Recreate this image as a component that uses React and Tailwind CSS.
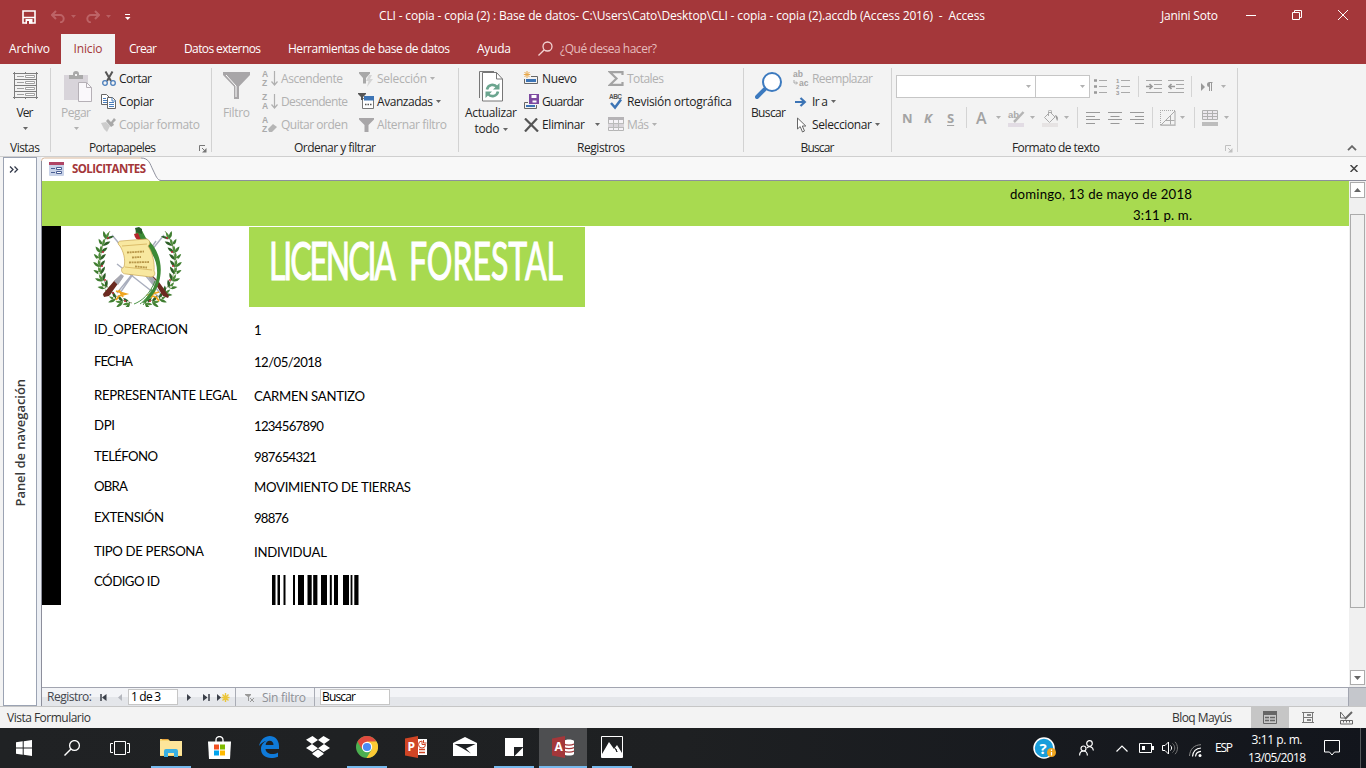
import { useLayoutEffect, useRef } from "react";

/* Text whose tracking is computed so that it spans exactly `w` pixels. */
function Fit({ w, className = "", children }) {
  const ref = useRef(null);
  useLayoutEffect(() => {
    const el = ref.current;
    el.style.letterSpacing = "0px";
    const natural = el.getBoundingClientRect().width;
    el.style.letterSpacing = (w - natural) / Math.max(1, children.length - 1) + "px";
    el.style.width = w + "px";
  }, [w, children]);
  return (
    <span ref={ref} className={"inline-block shrink-0 whitespace-pre " + className}>
      {children}
    </span>
  );
}

const Svg = ({ w, h, className = "", children }) => (
  <svg width={w} height={h} viewBox={`0 0 ${w} ${h}`} fill="none" className={"block shrink-0 " + className}>
    {children}
  </svg>
);

const Caret = ({ className = "text-[#666]" }) => (
  <Svg w={5} h={3} className={className}>
    <path d="M0 0h5L2.500 3z" fill="currentColor" />
  </Svg>
);

const Launcher = ({ className }) => (
  <Svg w={8} h={8} className={className}>
    <path d="M.5 6V.5H6M3 3l3 3" stroke="currentColor" />
    <path d="M7.500 3v4.500H3z" fill="currentColor" />
  </Svg>
);

/* ---------- Ribbon ---------- */
function Group({ width, label, lw, shift = "", launcher, children }) {
  return (
    <section className={"flex h-[92px] shrink-0 flex-col " + width}>
      <div className="flex h-[74px] pt-[3px]">{children}</div>
      <div className="relative flex h-[18px] items-center justify-center pt-[2px]">
        <Fit w={lw} className={"leading-[18px] text-[#262626] " + shift}>{label}</Fit>
        {launcher && <Launcher className={"absolute bottom-[3px] right-[4px] " + launcher} />}
      </div>
    </section>
  );
}
const Sep = () => <div className="mt-1 h-[84px] w-px shrink-0 bg-[#d2d2d2]" />;

function Cmd({ icon, w, off, caret, gap = "ml-[3px]", iw = "w-[16px]", children }) {
  return (
    <div className={"flex h-[23px] items-center " + (off ? "text-[#b1b1b1]" : "text-[#1e1e1e]")}>
      <div className={"flex shrink-0 items-center justify-center " + iw}>{icon}</div>
      <Fit w={w} className="ml-[3px]">{children}</Fit>
      {caret && <div className={gap}><Caret className={off ? "text-[#b1b1b1]" : "text-[#666]"} /></div>}
    </div>
  );
}

const SortIcon = ({ a, b, eraser }) => (
  <Svg w={16} h={17} className="overflow-visible">
    <text x="0" y="7" fontSize="8.500" fontWeight="700" fontFamily="Liberation Sans" fill="#aaa">{a}</text>
    <text x="0" y="16" fontSize="8.500" fontWeight="700" fontFamily="Liberation Sans" fill="#aaa">{b}</text>
    {eraser ? (
      <path d="M6 13l5-5 4 3-5 5H7z" fill="#b5b5b5" />
    ) : (
      <path d="M12.500 1v14M9.500 11.500l3 3.500 3-3.500" stroke="#b0b0b0" strokeWidth="1.200" />
    )}
  </Svg>
);

const NavArrow = ({ d }) => (
  <Svg w={16} h={13}>
    <path d="M0 .5h16M8 4.500h8M8 8.500h8M0 12.500h16" stroke="#a8a8a8" />
    <path d={d} stroke="#9a9a9a" strokeWidth="1.700" />
  </Svg>
);

const VLine = ({ className = "" }) => <div className={"h-[21px] w-px shrink-0 bg-[#d4d4d4] " + className} />;

function Ribbon() {
  return (
    <div className="flex h-[93px] border-b border-[#cfcfcf] bg-[#f3f3f3]">
      <Group width="w-[50px]" label="Vistas" lw={30}>
        <div className="flex w-[50px] flex-col items-center">
          <Svg w={25} h={27} className="mt-[5px]">
            <path d="M0 1.500h25M0 25.500h25M1.500 0v27M23.500 0v27M12.500 0v2M12.500 25v2M1 7.500h23M1 13.500h23M1 19.500h23" stroke="#7d7d7d" />
            <path d="M4 4.500h7M4 10.500h7M4 16.500h7M4 22.500h7" stroke="#a0a0a0" />
            <path d="M12.500 3.500h9v2h-9zM12.500 9.500h9v2h-9zM12.500 15.500h9v2h-9zM12.500 21.500h9v2h-9z" fill="#fff" stroke="#a0a0a0" />
          </Svg>
          <Fit w={17} className="mt-[6px] leading-4">Ver</Fit>
          <div className="mt-[6px]"><Caret /></div>
        </div>
      </Group>
      <Sep />
      <Group width="w-[160px]" label="Portapapeles" lw={67} shift="-ml-[17px]" launcher="text-[#777]">
        <div className="flex w-[50px] flex-col items-center text-[#b1b1b1]">
          <Svg w={28} h={31} className="mt-[4px] ml-[4px]">
            <path d="M0 4h24v25H0z" fill="#d8d4da" />
            <path d="M5 8V4h4V3a3 3 0 0 1 6 0v1h4v4z" fill="#a9a9a9" />
            <rect x="11" y="3" width="2" height="2" fill="#f3f3f3" />
            <path d="M14.500 11.500h8l5 5v14h-13z" fill="#faf8fb" stroke="#b5b0b6" />
            <path d="M22.500 11.500v5h5" stroke="#b5b0b6" />
          </Svg>
          <Fit w={30} className="mt-[3px] leading-4">Pegar</Fit>
          <div className="mt-[6px]"><Caret className="text-[#b1b1b1]" /></div>
        </div>
        <div>
          <Cmd w={33} iw="w-[15px]" icon={
            <Svg w={14} h={16}>
              <path d="M3.500.5L9 10M10.500.5L5 10" stroke="#555" strokeWidth="2" />
              <circle cx="3" cy="12" r="2.300" stroke="#4a7ebb" strokeWidth="1.300" />
              <circle cx="11" cy="12" r="2.300" stroke="#4a7ebb" strokeWidth="1.300" />
            </Svg>}>Cortar</Cmd>
          <Cmd w={35} iw="w-[15px]" icon={
            <Svg w={16} h={15}>
              <path d="M.5.5h5l3 3v7h-8z" fill="#fff" stroke="#666" />
              <path d="M2 4.500h3M2 6.500h4M2 8.500h4" stroke="#4a7ebb" />
              <path d="M6.500 3.500h5l3 3v8h-8z" fill="#fff" stroke="#666" />
              <path d="M11 3.500v3.500h4M8 8.500h5M8 10.500h5M8 12.500h5" stroke="#4a7ebb" />
            </Svg>}>Copiar</Cmd>
          <Cmd off w={81} iw="w-[15px]" icon={
            <Svg w={16} h={15}>
              <path d="M0 6l5-1 4 4-3 6-3-3z" fill="#ccc" />
              <path d="M5 4l2-2 3 3 3-4 2 2-3 3 1 2-3 2z" fill="#a8a8a8" />
            </Svg>}>Copiar formato</Cmd>
        </div>
      </Group>
      <Sep />
      <Group width="w-[246px]" label="Ordenar y filtrar" lw={82}>
        <div className="flex w-[49px] flex-col items-center text-[#b1b1b1]">
          <Svg w={27} h={28} className="mt-[5px]">
            <path d="M0 0h27v3L16 14.500V27h-5V14.500L0 3z" fill="#a8a6a8" />
            <path d="M3 3l10 11v11" stroke="#fff" />
          </Svg>
          <Fit w={27} className="mt-[5px] leading-4">Filtro</Fit>
        </div>
        <div className="w-[97px] pl-px">
          <Cmd off w={62} icon={<SortIcon a="A" b="Z" />}>Ascendente</Cmd>
          <Cmd off w={67} icon={<SortIcon a="Z" b="A" />}>Descendente</Cmd>
          <Cmd off w={67} icon={<SortIcon a="A" b="Z" eraser />}>Quitar orden</Cmd>
        </div>
        <div>
          <Cmd off caret w={50} icon={
            <Svg w={16} h={16}>
              <path d="M1 1h11v1.500L8 7v5.500H5V7L1 2.500z" fill="#a8a8a8" />
              <path d="M11 4h3l-2 4h3l-6 8 1.500-6H8z" fill="#d5d5d5" />
            </Svg>}>Selección</Cmd>
          <Cmd caret w={56} icon={
            <Svg w={16} h={17}>
              <path d="M4.500 5.500h11v10h-11z" fill="#fff" stroke="#777" />
              <path d="M6 3h10v4.500H6z" fill="#3c74b5" />
              <path d="M0 0h8v1L5 4v3H3V4L0 1z" fill="#555" />
              <path d="M7 11.500h1.500M9.500 11.500H11M12 11.500h1.500" stroke="#555" strokeWidth="1.500" />
            </Svg>}>Avanzadas</Cmd>
          <Cmd off w={70} icon={
            <Svg w={15} h={14}>
              <path d="M0 0h15v1.500L9.500 7v7h-4V7L0 1.500z" fill="#a8a6a8" />
            </Svg>}>Alternar filtro</Cmd>
        </div>
      </Group>
      <Sep />
      <Group width="w-[284px]" label="Registros" lw={48}>
        <div className="flex w-[64px] flex-col items-center">
          <Svg w={25} h={31} className="mt-[4px]">
            <path d="M.5 27V.5H15" stroke="#777" />
            <path d="M3.500 1.500h14l6 6.500v22h-20z" fill="#fff" stroke="#777" />
            <path d="M17.500 1.500V8h6" stroke="#777" />
            <path d="M8 18.500c1-5 7-6 10-2.500M19 20.500c-1 5-7 6-10 2.500" stroke="#6ba58f" strokeWidth="2.600" />
            <path d="M20.500 12v6.500H14zM6.500 27v-6.500H13z" fill="#6ba58f" />
          </Svg>
          <Fit w={52} className="mt-[3px] leading-4">Actualizar</Fit>
          <div className="flex items-center gap-[3px]"><Fit w={25} className="leading-4">todo</Fit><Caret /></div>
        </div>
        <div className="w-[84px]">
          <Cmd w={35} icon={
            <Svg w={16} h={15}>
              <path d="M4 0v7M.8 3.500h6.500M1.500 1l5 5M6.500 1l-5 5" stroke="#e9a94b" />
              <path d="M8 5.500h6.500v7h-13V8" stroke="#666" />
              <path d="M3 8h10v3H3z" fill="#3c74b5" />
            </Svg>}>Nuevo</Cmd>
          <Cmd w={42} icon={
            <Svg w={16} h={16}>
              <path d="M5 8.500H1.500v6h12V11" stroke="#666" />
              <path d="M3 11h9v2H3z" fill="#3c74b5" />
              <path d="M6 0h10v10H6z" fill="#7d4aa0" />
              <path d="M8.500 1h5v3h-5zM9.500 6.500h4v2h-4z" fill="#fff" />
            </Svg>}>Guardar</Cmd>
          <Cmd caret gap="ml-[10px]" w={43} icon={
            <Svg w={15} h={14}>
              <path d="M1 .5l13 13M13 .5L1 13.500" stroke="#555" strokeWidth="2.200" />
            </Svg>}>Eliminar</Cmd>
        </div>
        <div className="w-[130px] pl-px">
          <Cmd off w={37} icon={
            <Svg w={16} h={15}>
              <path d="M14.500 4V1.200H2L8.500 7.500 2 13.800h12.500V11" stroke="#a3a3a3" strokeWidth="2.200" />
            </Svg>}>Totales</Cmd>
          <Cmd w={105} icon={
            <Svg w={16} h={17} className="overflow-visible">
              <text x="1" y="5.500" fontSize="6.500" fontWeight="700" fontFamily="Liberation Sans" fill="#555" textLength="13">ABC</text>
              <path d="M3 10l4 4.500 6-8" stroke="#3c74b5" strokeWidth="2.500" />
            </Svg>}>Revisión ortográfica</Cmd>
          <Cmd off caret w={22} icon={
            <Svg w={16} h={15}>
              <path d="M.5.5h15v13H.5z" fill="#f6f3f7" stroke="#b5b5b5" />
              <path d="M0 0h16v3H0z" fill="#b5b3b6" />
              <path d="M0 6.500h16v3.500H0z" fill="#d9d5da" />
              <path d="M0 6.500h16M0 10.500h16M5.500 3v11M10.500 3v11" stroke="#bbb" />
            </Svg>}>Más</Cmd>
        </div>
      </Group>
      <Sep />
      <Group width="w-[147px]" label="Buscar" lw={34}>
        <div className="flex w-[49px] flex-col items-center">
          <Svg w={28} h={28} className="mt-[5px]">
            <path d="M10 17L2 25" stroke="#3c7abf" strokeWidth="4" strokeLinecap="round" />
            <circle cx="17" cy="10" r="9" fill="#fff" stroke="#3c7abf" strokeWidth="2" />
          </Svg>
          <Fit w={35} className="mt-[5px] leading-4">Buscar</Fit>
        </div>
        <div>
          <Cmd off w={61} icon={
            <Svg w={17} h={16} className="overflow-visible">
              <text x="0" y="6" fontSize="8.500" fontWeight="700" fontFamily="Liberation Sans" fill="#a5a5a5">ab</text>
              <text x="6" y="15" fontSize="8.500" fontWeight="700" fontFamily="Liberation Sans" fill="#a5a5a5">ac</text>
              <path d="M1 9v3h3M3 10.500L4.500 12 3 13.500" stroke="#aaa" />
            </Svg>}>Reemplazar</Cmd>
          <Cmd caret w={16} icon={
            <Svg w={12} h={10}>
              <path d="M0 5h9M5.500 1l4.300 4-4.300 4" stroke="#3c74b5" strokeWidth="2.200" />
            </Svg>}>Ir a</Cmd>
          <Cmd caret w={60} icon={
            <Svg w={11} h={16}>
              <path d="M1.500 1v11l2.700-2.500L6.500 15l2-1L6.300 9h3.500z" fill="#fff" stroke="#666" />
            </Svg>}>Seleccionar</Cmd>
        </div>
      </Group>
      <Sep />
      <Group width="w-[345px]" label="Formato de texto" lw={88} shift="-ml-[17px]" launcher="text-[#c0c0c0]">
        <div className="flex flex-col pl-[4px] pt-[8px]">
          <div className="flex h-[23px] items-center">
            <div className="flex h-[23px] w-[140px] items-center justify-end border border-[#c6c6c6] bg-white pr-[4px]"><Caret className="text-[#b1b1b1]" /></div>
            <div className="-ml-px flex h-[23px] w-[55px] items-center justify-end border border-[#c6c6c6] bg-white pr-[4px]"><Caret className="text-[#b1b1b1]" /></div>
            <Svg w={13} h={15} className="ml-[4px]">
              <path d="M0 1.500h3M0 7.500h3M0 13.500h3" stroke="#999" strokeWidth="2.500" />
              <path d="M5 1.500h8M5 7.500h8M5 13.500h8" stroke="#aaa" />
            </Svg>
            <Svg w={14} h={17} className="ml-[9px] overflow-visible">
              {["1", "2", "3"].map((n, i) => (
                <text key={n} x="0" y={4.5 + i * 6} fontSize="6" fontWeight="700" fontFamily="Liberation Sans" fill="#999">{n}</text>
              ))}
              <path d="M5 2.500h9M5 8.500h9M5 14.500h9" stroke="#aaa" />
            </Svg>
            <VLine className="ml-[8px]" />
            <div className="ml-[7px]"><NavArrow d="M0 6.500h6M3.500 4l2.500 2.500L3.500 9" /></div>
            <div className="ml-[6px]"><NavArrow d="M7 6.500H1M3.500 4L1 6.500 3.500 9" /></div>
            <VLine className="ml-[7px]" />
            <Svg w={12} h={10} className="ml-[9px]">
              <path d="M0 1v8l4-4z" fill="#999" />
              <path d="M11.500.5H8M8.500 0v9M10.500 0v9" stroke="#999" />
              <path d="M8.500 0a2.500 2.500 0 0 0 0 5z" fill="#999" />
            </Svg>
            <div className="ml-[8px]"><Caret className="text-[#b1b1b1]" /></div>
          </div>
          <div className="mt-[8px] flex h-[23px] items-center text-[13px] font-bold text-[#a3a3a3]">
            <span className="w-[23px] pl-[6px]">N</span>
            <span className="w-[22px] pl-[5px] italic">K</span>
            <span className="w-[25px] pl-[6px] underline underline-offset-2">S</span>
            <VLine />
            <span className="w-[29px] pl-[9px] text-[16px] font-semibold">A</span>
            <Caret className="text-[#b1b1b1]" />
            <Svg w={16} h={17} className="ml-[7px] mt-[1px] overflow-visible">
              <text x="0" y="8" fontSize="9.500" fontWeight="700" fontFamily="Liberation Sans" fill="#aaa">ab</text>
              <path d="M15.500 2L9 9l-3 3" stroke="#b5b5b5" strokeWidth="2.500" />
              <path d="M0 13h16v4H0z" fill="#e2dce4" />
            </Svg>
            <div className="ml-[6px]"><Caret className="text-[#b1b1b1]" /></div>
            <Svg w={16} h={17} className="ml-[7px] mt-[1px]">
              <path d="M2.500 7.500L8 2l5 5-5.500 5.500zM6.500 6V1.500a1.500 1.500 0 0 1 3 0V4" stroke="#aaa" />
              <path d="M13 5c4 1 3 5 2 6z" fill="#999" />
              <path d="M0 13h16v4H0z" fill="#e6e3e3" />
            </Svg>
            <div className="ml-[6px]"><Caret className="text-[#b1b1b1]" /></div>
            <VLine className="ml-[8px]" />
            <Svg w={14} h={13} className="ml-[8px]"><path d="M0 1.500h14M0 5.500h9M0 8.500h14M0 12.500h9" stroke="#999" /></Svg>
            <Svg w={14} h={13} className="ml-[8px]"><path d="M0 1.500h14M2.500 5.500h9M0 8.500h14M2.500 12.500h9" stroke="#999" /></Svg>
            <Svg w={14} h={13} className="ml-[8px]"><path d="M0 1.500h14M5 5.500h9M0 8.500h14M5 12.500h9" stroke="#999" /></Svg>
            <VLine className="ml-[8px]" />
            <Svg w={16} h={16} className="ml-[7px]">
              <path d="M.5 0v16M0 .5h15M.5 15.500h15" stroke="#aaa" strokeDasharray="1 1" />
              <path d="M1 15L15 1v14zM10.500 5.500v9M5.500 10.500h9" stroke="#aaa" />
            </Svg>
            <div className="ml-[4px]"><Caret className="text-[#b1b1b1]" /></div>
            <VLine className="ml-[9px]" />
            <Svg w={16} h={16} className="ml-[7px]">
              <path d="M.5.5h15v9H.5z" fill="#ece8ed" />
              <path d="M.5.5h15v9H.5zM.5 3.500h15M.5 6.500h15M5.500 0v9M10.500 0v9" stroke="#b0b0b0" />
              <path d="M0 12h16v4H0z" fill="#bdbdbd" />
            </Svg>
            <div className="ml-[6px]"><Caret className="text-[#b1b1b1]" /></div>
          </div>
        </div>
      </Group>
      <Sep />
      <Svg w={10} h={6} className="ml-[109px] mt-[81px]"><path d="M1 5.200l4-4 4 4" stroke="#666" strokeWidth="1.800" /></Svg>
    </div>
  );
}

/* ---------- Title ---------- */
function TitleBar() {
  return (
    <div className="flex h-[34px] items-center bg-[#a4373a] pb-[2px] text-white">
      <Svg w={14} h={14} className="ml-[22px] mt-[2px]">
        <path d="M1 1h12v12H1z" stroke="#fff" strokeWidth="1.600" />
        <path d="M1 7.500h12" stroke="#fff" strokeWidth="1.500" />
        <path d="M3.500 9h7v4.500h-7z" fill="#fff" />
        <path d="M5 11h2v3H5z" fill="#a4373a" />
      </Svg>
      <Svg w={14} h={13} className="ml-[15px]">
        <path d="M5 1L1 5l4 4M1.500 5H9a3.700 3.700 0 0 1 0 7.400" stroke="#bd6366" strokeWidth="2" />
      </Svg>
      <div className="ml-[6px]"><Caret className="text-[#b85f62]" /></div>
      <Svg w={14} h={13} className="ml-[10px]">
        <path d="M9 1l4 4-4 4M12.500 5H5a3.700 3.700 0 0 0 0 7.400" stroke="#bd6366" strokeWidth="2" />
      </Svg>
      <div className="ml-[6px]"><Caret className="text-[#b85f62]" /></div>
      <Svg w={6} h={6} className="ml-[14px] mt-[2px]"><path d="M0 .5h5" stroke="#fff" /><path d="M0 3h5.500L2.700 6z" fill="#fff" /></Svg>
      <Fit w={606} className="ml-[248px]">CLI - copia - copia (2) : Base de datos- C:\Users\Cato\Desktop\CLI - copia - copia (2).accdb (Access 2016)  -  Access</Fit>
      <Fit w={57} className="ml-[176px]">Janini Soto</Fit>
      <Svg w={10} h={11} className="ml-[28px]"><path d="M0 4.500h10" stroke="#fff" /></Svg>
      <Svg w={10} h={10} className="ml-[36px] -mt-[2px]"><path d="M.5 2.500h7v7h-7zM2.500 2.500v-2h7v7h-2" stroke="#fff" /></Svg>
      <Svg w={10} h={10} className="ml-[36px] -mt-[2px]"><path d="M0 0l10 10M10 0L0 10" stroke="#fff" /></Svg>
    </div>
  );
}

function Tabs() {
  return (
    <div className="flex h-[30px] items-center bg-[#a4373a] text-white">
      <Fit w={41} className="ml-[9px]">Archivo</Fit>
      <div className="ml-[11px] flex h-full w-[54px] items-center justify-center bg-[#f3f3f3] text-[#a4373a]"><Fit w={29}>Inicio</Fit></div>
      <Fit w={28} className="ml-[14px]">Crear</Fit>
      <Fit w={77} className="ml-[27px]">Datos externos</Fit>
      <Fit w={162} className="ml-[27px]">Herramientas de base de datos</Fit>
      <Fit w={34} className="ml-[27px]">Ayuda</Fit>
      <Svg w={15} h={15} className="ml-[27px] -mt-[2px]">
        <circle cx="9.500" cy="5.500" r="4.500" stroke="#f3d4d4" strokeWidth="1.300" />
        <path d="M6.300 8.700L.5 14.500" stroke="#f3d4d4" strokeWidth="1.300" />
      </Svg>
      <Fit w={97} className="ml-[7px] text-[#e6bcbd]">¿Qué desea hacer?</Fit>
    </div>
  );
}

/* ---------- Document ---------- */
/* Stem points of half a wreath: x, y and the heading of the branch in degrees. */
const STEM = [
  [40, 76, 175], [33, 75, 190], [26, 72, 205], [21, 67, 222], [16, 61, 235], [13, 54, 245], [11, 47, 256],
  [10, 40, 265], [10, 33, 272], [11, 26, 278], [13, 19, 287], [16, 12, 300],
];

function Emblem() {
  const leaf = "M0 0Q4 -3.200 8.500 0Q4 2.400 0 0";
  const side = (
    <g>
      <path d="M42 76C22 73 9 52 10 34 11 22 14 12 20 4" stroke="#7b8b5a" strokeWidth=".8" />
      {STEM.map(([x, y, a], i) => (
        <g key={i} transform={`translate(${x} ${y})`}>
          <path d={leaf} transform={`rotate(${a - 48})`} fill="#3f7d30" />
          <path d={leaf} transform={`rotate(${a + 42})`} fill="#2c5f26" />
          <path d={leaf} transform={`rotate(${a - 6}) scale(.9)`} fill="#4f8c3b" />
          <circle cx={i % 2 ? 2 : -2} cy="-1" r="1" fill={i % 2 ? "#c0293a" : "#f4efe9"} />
        </g>
      ))}
    </g>
  );
  return (
    <Svg w={95} h={80}>
      <path d="M22 8l48 58M74 8L27 66M27 37l42 33M66 14L30 66" stroke="#a9aebd" strokeWidth="1.400" />
      {side}
      <g transform="translate(95 0) scale(-1 1)">{side}</g>
      <path d="M13 67l11-13 7-6 2 2-6 8-8 11-5 1z" fill="#6b2a20" />
      <path d="M79 69L69 55l-7-7-2 2 6 8 7 11 5 2z" fill="#6b2a20" />
      <path d="M24 54l7-7 3 2-6 9zM68 56l-7-8-3 2 6 9z" fill="#a7a9b3" />
      <path d="M26 64l10 3-7 2-3 4M69 65l-10 3 7 2 3 4M29 63l4 7M65 63l-4 8" stroke="#efa51f" strokeWidth="1.800" />
      <path d="M47 1c5-1 6 5 9 10 11 9 17 24 14 40-2 11-8 19-14 24l-4 1c8-9 14-16 15-28 1-14-5-24-15-32-6-5-8-9-5-15z" fill="#3c8a35" />
      <path d="M65 54C60 67 52 74 44 77M66 57c-4 10-9 16-13 21M62 62c-3 7-8 12-12 15" stroke="#3c8a35" strokeWidth=".9" />
      <path d="M44 7c1 5 4 7 7 6L48 6z" fill="#b3262b" />
      <path d="M45 1l4-1 3 2v5l-6-2z" fill="#285f2b" />
      <path d="M31 14l25-2c4 0 5 5 2 7 4 5 7 17 6 25 2 3 0 6-3 6l-25-3c-5 0-6-6-2-7 2-8-1-16-4-21-3-2-2-5 1-5z" fill="#f8e8a0" stroke="#c9a552" strokeWidth=".7" />
      <path d="M32 19l25-2M35 40l27 3" stroke="#dcbd6a" />
      <path d="M37 25.500l17-1M42 30.500l9-.5M39 35.500l20-.5M45 39.500l12 1" stroke="#b8974a" strokeWidth="1.800" strokeDasharray="2 .6" />
    </Svg>
  );
}

const FIELDS = [
  ["ID_OPERACION", 94, "1", 6, "mt-[13px]"],
  ["FECHA", 39, "12/05/2018", 68, "mt-[14px]"],
  ["REPRESENTANTE LEGAL", 143, "CARMEN SANTIZO", 111, "mt-[16px]"],
  ["DPI", 21, "1234567890", 70, "mt-[12px]"],
  ["TELÉFONO", 64, "987654321", 63, "mt-[13px]"],
  ["OBRA", 34, "MOVIMIENTO DE TIERRAS", 157, "mt-[12px]"],
  ["EXTENSIÓN", 70, "98876", 35, "mt-[13px]"],
  ["TIPO DE PERSONA", 110, "INDIVIDUAL", 73, "mt-[16px]"],
  ["CÓDIGO ID", 66, null, 0, "mt-[12px]"],
];
const BARS = [[0, 3.5], [5.5, 2.5], [11.5, 2], [21, 2], [26, 6], [35.5, 4.2], [41.2, 4.2], [49, 6], [57.8, 2], [62, 4], [71, 6], [78.6, 1.8], [82.3, 4.2]];

function Form() {
  return (
    <div className="flex min-w-0 flex-1 flex-col bg-white font-['Lato','Open_Sans',sans-serif] text-[13.2px] text-black">
      <header className="flex h-[45px] shrink-0 flex-col items-end bg-[#a8da50] pr-[157px] pt-[3px] leading-[21px]">
        <Fit w={182}>domingo, 13 de mayo de 2018</Fit>
        <Fit w={59}>3:11 p. m.</Fit>
      </header>
      <div className="flex h-[379px] shrink-0">
        <div className="w-[19px] shrink-0 bg-black" />
        <div className="flex flex-col pl-[29px] pt-px">
          <div className="flex h-[80px]">
            <Emblem />
            <div className="ml-[64px] flex w-[336px] items-start bg-[#a8da50] pl-[20px] text-[32px] leading-[40px] text-white [-webkit-text-stroke:0.700px_white]">
              <div className="flex origin-top scale-y-[1.650]">
                <Fit w={127}>LICENCIA</Fit>
                <Fit w={154} className="ml-[13px]">FORESTAL</Fit>
              </div>
            </div>
          </div>
          {FIELDS.map(([label, lw, value, vw, mt]) => (
            <div key={label} className={"flex h-[18px] items-start pl-[4px] leading-[18px] " + mt}>
              <div className="w-[160px] shrink-0"><Fit w={lw}>{label}</Fit></div>
              {value ? (
                <Fit w={vw} className="mt-px">{value}</Fit>
              ) : (
                <Svg w={88} h={30} className="ml-[18px] mt-[3px]">
                  {BARS.map(([x, w]) => <rect key={x} x={x} width={w} height="30" fill="#000" />)}
                </Svg>
              )}
            </div>
          ))}
        </div>
      </div>
    </div>
  );
}

function ScrollBar() {
  return (
    <div className="flex w-[17px] shrink-0 flex-col bg-[#f0f0f0] pl-px pt-px">
      <div className="flex h-[16px] w-[15px] items-center justify-center border border-[#ababab] bg-white">
        <Svg w={7} h={4}><path d="M0 4h7L3.500 0z" fill="#666" /></Svg>
      </div>
      <div className="mt-[16px] h-[394px] w-[15px] border border-[#ababab] bg-[#f0f0f0]" />
      <div className="mt-[62px] flex h-[15px] w-[15px] items-center justify-center border border-[#ababab] bg-white">
        <Svg w={7} h={4}><path d="M0 0h7L3.500 4z" fill="#666" /></Svg>
      </div>
    </div>
  );
}

function RecordBar() {
  return (
    <div className="flex h-[19px] shrink-0 border-t border-[#a2a5b0] bg-linear-to-b from-[#f3f4f7] from-50% to-[#e4e6ea] to-50%">
      <div className="flex flex-1 items-center border-r border-[#a2a5b0] text-[#44474f]">
        <Fit w={45} className="ml-[5px]">Registro:</Fit>
        <Svg w={7} h={7} className="ml-[8px]"><path d="M1 0v7" stroke="#3b3f49" strokeWidth="1.500" /><path d="M6.500 0v7L2 3.500z" fill="#3b3f49" /></Svg>
        <Svg w={4} h={7} className="ml-[11px]"><path d="M4 0v7L0 3.500z" fill="#b4b7be" /></Svg>
        <div className="ml-[6px] flex h-[16px] w-[50px] items-center border border-[#c6c6c6] bg-white pl-[2px] text-black"><Fit w={30} className="leading-[14px]">1 de 3</Fit></div>
        <Svg w={4} h={7} className="ml-[9px]"><path d="M0 0v7l4-3.500z" fill="#3b3f49" /></Svg>
        <Svg w={7} h={7} className="ml-[12px]"><path d="M6 0v7" stroke="#3b3f49" strokeWidth="1.500" /><path d="M0 0v7l4.500-3.500z" fill="#3b3f49" /></Svg>
        <Svg w={13} h={9} className="ml-[7px]">
          <path d="M0 1v7l4-3.500z" fill="#3b3f49" />
          <path d="M8.500 0v9M4.500 4.500h8M5.500 1.500l6 6M11.500 1.500l-6 6" stroke="#ecc63a" strokeWidth="1.400" />
        </Svg>
        <div className="ml-[5px] h-full w-px bg-[#a9acb5]" />
        <Svg w={9} h={9} className="ml-[9px]">
          <path d="M0 1h6v1L4 4v4H3V4L0 2z" fill="#999" /><path d="M5 5l4 4M9 5L5 9" stroke="#999" />
        </Svg>
        <Fit w={44} className="ml-[8px] mt-[2px] text-[#8e9096]">Sin filtro</Fit>
        <div className="ml-[8px] h-full w-px bg-[#a9acb5]" />
        <div className="ml-[5px] flex h-[16px] w-[70px] items-center border border-[#c6c6c6] bg-white pl-[1px] text-black"><Fit w={34} className="leading-[14px]">Buscar</Fit></div>
      </div>
      <div className="w-[17px] bg-[#c5c7cc]" />
    </div>
  );
}

function Workspace() {
  return (
    <div className="flex h-[549px] bg-[#f3f3f3]">
      <aside className="ml-[3px] flex w-[34px] shrink-0 flex-col items-center border border-[#9ba3b3] bg-white">
        <Svg w={10} h={7} className="mt-[8px] -ml-[13px]"><path d="M1 .5l3 3-3 3M5.500.5l3 3-3 3" stroke="#333a4a" strokeWidth="1.300" /></Svg>
        <div className="mt-[203px] flex h-[133px] items-center">
          <span className="rotate-180 text-[13px] font-semibold leading-[18px] tracking-[-0.050px] text-[#3a3a3a] [writing-mode:vertical-rl]">Panel de navegación</span>
        </div>
      </aside>
      <div className="flex w-[1329px] flex-col">
        <div className="flex h-[24px] shrink-0 bg-[#f8f8f8]">
          <div className="w-[4px] shrink-0 bg-[#eceff4]" />
          <div className="flex flex-1 items-center border-b border-[#8d8f9c]">
            <div className="relative -mb-px flex h-[24px] w-[120px] items-center">
              <Svg w={120} h={24} className="absolute left-0 top-0">
                <path d="M.5 24V4a3 3 0 0 1 3-3H100c8 0 9 6 12 12s4 10 7.500 10.500V24z" fill="#fff" />
                <path d="M.5 24V4a3 3 0 0 1 3-3H100" stroke="#d9b89b" />
                <path d="M100 1c8 0 9 6 12 12s4 10 8 10.500M.5 24V4" stroke="#8d8f9c" />
              </Svg>
              <Svg w={15} h={14} className="relative ml-[8px]">
                <rect width="15" height="14" rx="1" fill="#c9d3e8" />
                <path d="M0 0h15v3H0z" fill="#b04565" />
                <path d="M2 6.500h4M2 10.500h4" stroke="#4a5f94" />
                <path d="M7.500 5.500h5v2h-5zM7.500 9.500h5v2h-5z" fill="#fff" stroke="#4a5f94" />
              </Svg>
              <Fit w={74} className="relative ml-[8px] text-[11.500px] font-bold text-[#a4373a]">SOLICITANTES</Fit>
            </div>
            <Svg w={8} h={7} className="ml-auto mr-[8px]"><path d="M.5 0l7 7M7.500 0l-7 7" stroke="#444" strokeWidth="1.500" /></Svg>
          </div>
        </div>
        <div className="flex flex-1">
          <div className="w-[5px] shrink-0 border-r border-[#8d8f9c] bg-[#eceff4]" />
          <div className="flex min-w-0 flex-1 flex-col">
            <div className="flex h-[506px]"><Form /><ScrollBar /></div>
            <RecordBar />
          </div>
        </div>
      </div>
    </div>
  );
}

function StatusBar() {
  return (
    <div className="flex h-[22px] items-center border-t border-[#c6c6c6] bg-[#f3f3f3] text-[#333]">
      <Fit w={84} className="ml-[7px]">Vista Formulario</Fit>
      <Fit w={60} className="ml-[1081px]">Bloq Mayús</Fit>
      <div className="ml-[19px] flex h-full w-[38px] items-center justify-center bg-[#c6c6c6]">
        <Svg w={14} h={13}><path d="M.5.5h13v12H.5z" stroke="#666" /><path d="M0 0h14v4H0z" fill="#666" /><path d="M2 6.500h4M2 9.500h4M7 6.500h5M7 9.500h5" stroke="#666" strokeWidth="1.700" /></Svg>
      </div>
      <Svg w={12} h={13} className="ml-[13px]">
        <path d="M0 1.500h12M0 11.500h12M1.500 1v11M10.500 1v11M1 6.500h10" stroke="#777" /><path d="M5 4h4M5 9h4" stroke="#666" strokeWidth="1.500" />
      </Svg>
      <Svg w={15} h={14} className="ml-[25px]">
        <path d="M1.500 1v6l5 0zM1.500 9.500h12v3.500h-12z" stroke="#666" /><path d="M13 1L6 8" stroke="#666" strokeWidth="2" /><path d="M4.500 10v1.500M7.500 10v1.500M10.500 10v1.500" stroke="#666" />
      </Svg>
    </div>
  );
}

/* ---------- Taskbar ---------- */
const Office = ({ c, letter, children }) => (
  <Svg w={22} h={22}>
    {children}
    <path d="M0 2.500L13 0v22L0 19.500z" fill={c} />
    <text x="2.500" y="15" fontSize="12" fontWeight="700" fontFamily="Open Sans" fill="#fff">{letter}</text>
  </Svg>
);

const APPS = [
  [true, "", <Svg w={22} h={19}><path d="M0 1h8l2 2h12v15H0z" fill="#f8d775" /><path d="M0 3h22v14H0z" fill="#fde59a" /><path d="M2 1h6v1H2z" fill="#e8a33d" /><path d="M4 19v-6a2 2 0 0 1 2-2h10a2 2 0 0 1 2 2v6h-4v-4H8v4z" fill="#3ab0e2" /></Svg>],
  [false, "", <Svg w={23} h={23}><path d="M8 6V4a3.500 3.500 0 0 1 7 0v2" stroke="#fff" strokeWidth="1.300" /><path d="M0 5.500h23L22 23H1z" fill="#fff" /><path d="M6 8.500h5v5H6z" fill="#f25022" /><path d="M12 8.500h5v5h-5z" fill="#7fba00" /><path d="M6 14.500h5v5H6z" fill="#00a4ef" /><path d="M12 14.500h5v5h-5z" fill="#ffb900" /></Svg>],
  [false, "", <Svg w={20} h={22}><path d="M0 10C1.500 3.500 6 0 10.800 0 16 0 20 4 20 10v3H6.500c.3 3.500 3.500 5 6.500 5 2.400 0 4.600-.7 6-1.600v4.300C17 21.500 14.500 22 12 22 6 22 2 18.500 2 13c0-4 2.300-7 6-8.300C5 5 2 7 0 10zM6.600 9h7.900c0-2.600-1.400-4.200-3.800-4.200S6.900 6.500 6.600 9z" fill="#0f7ad9" fillRule="evenodd" /></Svg>],
  [false, "", <Svg w={24} h={22}><path d="M6.500 0L12 4 6 8 0 3.800zM17.500 0L24 3.800 18 8l-6-4zM0 12l6-4 6 4.200L6.500 16zM18 8l6 4-6.500 4-5.500-3.800zM12 13.500l5.500 3.700v1L12 22l-5.500-3.800v-1z" fill="#fff" /></Svg>],
  [true, "", <Svg w={22} h={22}><circle cx="11" cy="11" r="11" fill="#4caf50" /><path d="M1.500 5.500A11 11 0 0 1 20.500 5.500L11 6.500 6.200 13.500z" fill="#e04a3f" /><path d="M20.500 5.500A11 11 0 0 1 10.500 22l5.500-9-5-7.500z" fill="#fcc934" /><circle cx="11" cy="11" r="5.200" fill="#fff" /><circle cx="11" cy="11" r="4.100" fill="#4a8af4" /></Svg>],
  [false, "", <Office c="#d04525" letter="P"><path d="M11 3h11v16H11z" fill="#fff" /><path d="M14 13.500h6M14 16.500h6" stroke="#d04525" strokeWidth="1.300" /><path d="M17 5a3.500 3.500 0 1 0 3.500 3.500H17zM18.500 4v3h3" stroke="#d04525" /></Office>],
  [false, "", <Svg w={24} h={20}><path d="M0 6L12 0l12 6v13H0z" fill="#fff" /><path d="M1.500 7h21L13 11.500l5 5L9 11z" fill="#1f2124" /></Svg>],
  [true, "", <Svg w={18} h={18}><path d="M0 0h18v9l-9 9H0z" fill="#fff" /><path d="M9 9h9v9H9z" fill="#1f2124" /><path d="M9.500 18L18 9.500V18z" fill="#fff" /></Svg>],
  [true, "bg-[#4e4f51]", <Office c="#a4373a" letter="A"><path d="M12 5c1-2 9-2 10 0v13c-1 2-9 2-10 0z" fill="#fff" /><path d="M12 8c2 1.500 8 1.500 10 0M12 11.500c2 1.500 8 1.500 10 0M12 15c2 1.500 8 1.500 10 0" stroke="#a4373a" strokeWidth="1.200" /></Office>],
  [true, "", <Svg w={22} h={22}><path d="M.5.5h21v21H.5z" stroke="#fff" /><path d="M1 18L8 6l5 7 3-4 5 8v4H1z" fill="#fff" /><path d="M14 12l2 4-1-3" stroke="#1f2124" /></Svg>],
];

function Taskbar() {
  return (
    <div className="flex h-[40px] items-center bg-linear-to-r from-[#202224] via-[#1e2022] to-[#12151c] text-[12px] text-white">
      <div className="flex w-[48px] justify-center">
        <Svg w={16} h={16}><path d="M0 2.200l6.700-.9v6.200H0zM7.700 1.200L16 0v7.500H7.700zM0 8.500h6.700v6.200L0 13.800zM7.700 8.500H16V16l-8.300-1.200z" fill="#fff" /></Svg>
      </div>
      <div className="flex w-[48px] justify-center">
        <Svg w={17} h={16}><circle cx="10.500" cy="5.500" r="4.900" stroke="#fff" strokeWidth="1.300" /><path d="M7 9L.5 15.500" stroke="#fff" strokeWidth="1.400" /></Svg>
      </div>
      <div className="flex w-[50px] justify-center pr-[2px]">
        <Svg w={20} h={14}><path d="M4.500.5h11v13h-11zM3 2.500H.5v9H3M17 2.500h2.500v9H17" stroke="#fff" /></Svg>
      </div>
      {APPS.map(([open, bg, icon], i) => (
        <div key={i} className="flex h-[40px] w-[49px] shrink-0 justify-center">
          <div className={"flex h-full flex-col items-center justify-end " + (bg ? "w-[48px] " + bg : "w-[40px]")}>
            <div className="flex h-[38px] items-center">{icon}</div>
            <div className={"h-[2px] " + (bg ? "w-[48px] " : "w-[40px] ") + (open ? "bg-[#76b9ed]" : "")} />
          </div>
        </div>
      ))}
      <Svg w={24} h={24} className="ml-[397px] mt-[2px]">
        <circle cx="11" cy="11" r="10" fill="#1a9edb" stroke="#fff" strokeWidth="1.500" />
        <text x="6.500" y="16.500" fontSize="15" fontWeight="700" fontFamily="Open Sans" fill="#fff">?</text>
        <circle cx="18.500" cy="15.500" r="4.500" fill="#f0a51e" /><path d="M18.500 12.500V14M18.500 15v3.500" stroke="#fff" strokeWidth="1.200" />
      </Svg>
      <Svg w={15} h={16} className="ml-[22px]">
        <circle cx="10.500" cy="3.500" r="2.800" stroke="#fff" strokeWidth="1.200" /><circle cx="4.500" cy="8.500" r="2.500" stroke="#fff" strokeWidth="1.200" />
        <path d="M.6 15.500c0-6 7.800-6 7.800 0M8 8c2-2.500 6-1.500 6.400 2.500" stroke="#fff" strokeWidth="1.200" />
      </Svg>
      <Svg w={12} h={7} className="ml-[22px]"><path d="M.5 6.500L6 1l5.500 5.500" stroke="#fff" strokeWidth="1.200" /></Svg>
      <Svg w={15} h={10} className="ml-[11px]"><path d="M.5.5h12v9H.5z" stroke="#fff" /><path d="M3 3h3v4H3zM13 3h2v4h-2z" fill="#fff" /></Svg>
      <Svg w={16} h={14} className="ml-[8px]">
        <path d="M.5 4.500H3l3.500-3.500v12L3 9.500H.5z" stroke="#fff" /><path d="M8.500 4.500c1.500 1.500 1.500 3.500 0 5" stroke="#fff" /><path d="M10.500 2.500c3 2.500 3 6.500 0 9M13 .8c3.300 3.500 3.300 9 0 12.400" stroke="#777" />
      </Svg>
      <Svg w={13} h={13} className="ml-[11px] mt-[4px]">
        <path d="M.5 12C1 5 5 1 12 .7" stroke="#888" /><path d="M3.500 12.500C4 7.500 7 4.300 12 4M6.500 12.500c.3-3 2.500-5 5.500-5.200" stroke="#fff" strokeWidth="1.200" /><circle cx="11" cy="11.500" r="1.500" fill="#fff" />
      </Svg>
      <Fit w={18} className="ml-[13px]">ESP</Fit>
      <div className="ml-[15px] mt-[1px] flex w-[58px] flex-col items-center leading-[18px]">
        <Fit w={51}>3:11 p. m.</Fit>
        <Fit w={58}>13/05/2018</Fit>
      </div>
      <Svg w={16} h={16} className="ml-[18px]"><path d="M.5.5h15v11.500h-5L8 15l-2.500-3h-5z" stroke="#fff" /></Svg>
      <div className="ml-[20px] h-full w-px bg-[#55575a]" />
    </div>
  );
}

export default function App() {
  return (
    <div className="h-[768px] w-[1366px] overflow-hidden bg-[#f3f3f3] font-['Open_Sans','Noto_Sans',sans-serif] text-[12px] leading-[16px] text-[#262626]">
      <TitleBar />
      <Tabs />
      <Ribbon />
      <Workspace />
      <StatusBar />
      <Taskbar />
    </div>
  );
}
